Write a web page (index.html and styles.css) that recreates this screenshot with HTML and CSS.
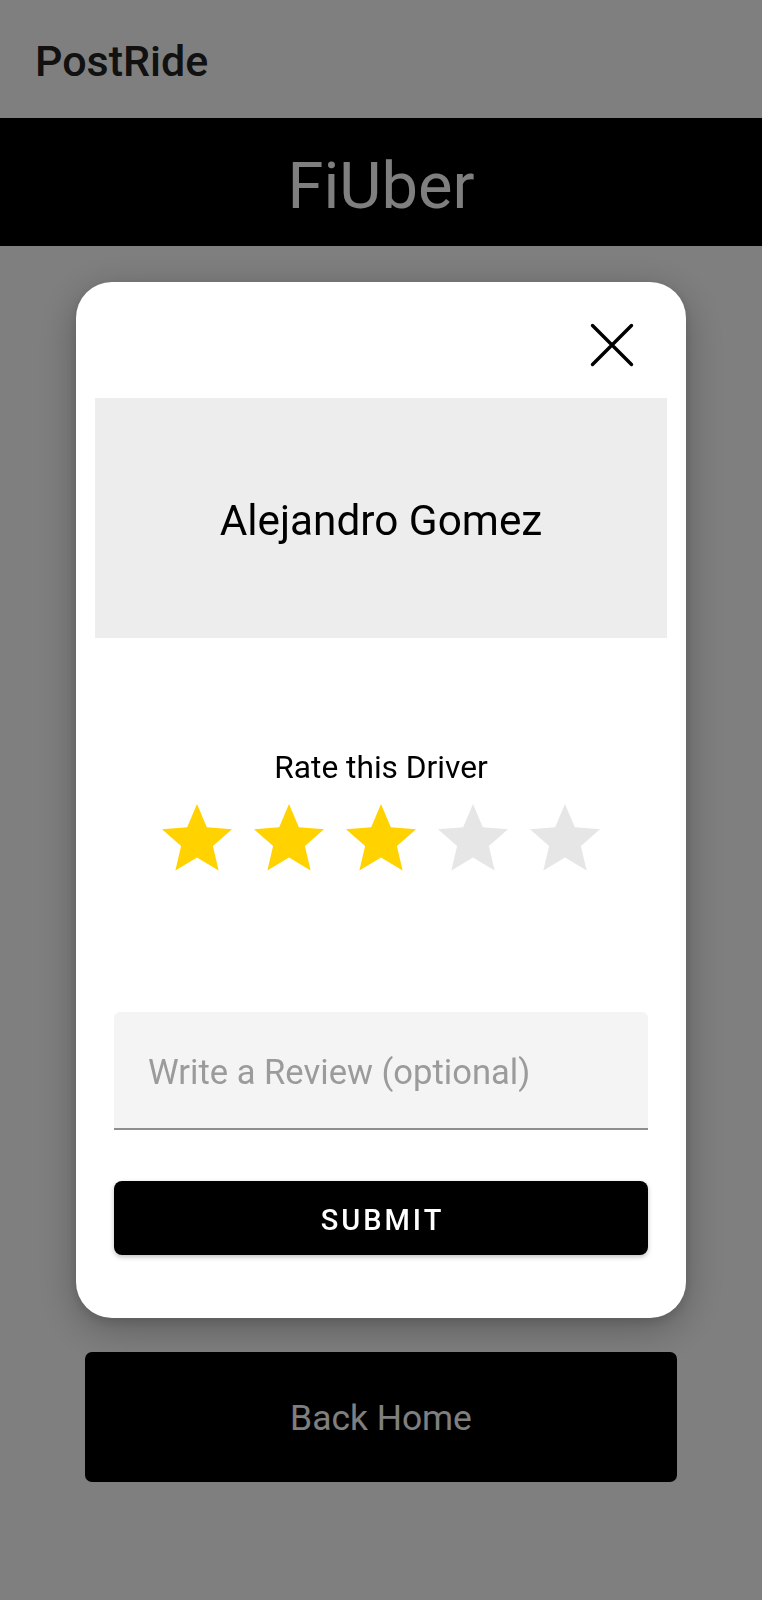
FILE: index.html
```html
<!DOCTYPE html>
<html lang="en">
<head>
<meta charset="utf-8">
<title>PostRide</title>
<link rel="stylesheet" href="styles.css">
</head>
<body>
  <div class="page">
    <header class="topbar">
      <h1 class="topbar-title">PostRide</h1>
    </header>
    <div class="brand">FiUber</div>
    <main class="content">
      <button class="back-btn" type="button">Back Home</button>
    </main>
  </div>

  <div class="scrim"></div>

  <div class="modal" role="dialog" aria-label="Rate driver">
    <div class="modal-head">
      <button class="close-btn" type="button" aria-label="Close">
        <svg width="60" height="60" viewBox="0 0 60 60"><path d="M10.5 10.5 L49.5 49.5 M49.5 10.5 L10.5 49.5" stroke="#000" stroke-width="3.4" stroke-linecap="round" fill="none"/></svg>
      </button>
    </div>
    <div class="driver-box">Alejandro Gomez</div>
    <div class="rate-label">Rate this Driver</div>
    <div class="stars">
      <svg class="star on" viewBox="0 0 24 24"><path d="M12 17.27L18.18 21l-1.64-7.03L22 9.24l-7.19-.61L12 2 9.19 8.63 2 9.24l5.46 4.73L5.82 21z"/></svg>
      <svg class="star on" viewBox="0 0 24 24"><path d="M12 17.27L18.18 21l-1.64-7.03L22 9.24l-7.19-.61L12 2 9.19 8.63 2 9.24l5.46 4.73L5.82 21z"/></svg>
      <svg class="star on" viewBox="0 0 24 24"><path d="M12 17.27L18.18 21l-1.64-7.03L22 9.24l-7.19-.61L12 2 9.19 8.63 2 9.24l5.46 4.73L5.82 21z"/></svg>
      <svg class="star off" viewBox="0 0 24 24"><path d="M12 17.27L18.18 21l-1.64-7.03L22 9.24l-7.19-.61L12 2 9.19 8.63 2 9.24l5.46 4.73L5.82 21z"/></svg>
      <svg class="star off" viewBox="0 0 24 24"><path d="M12 17.27L18.18 21l-1.64-7.03L22 9.24l-7.19-.61L12 2 9.19 8.63 2 9.24l5.46 4.73L5.82 21z"/></svg>
    </div>
    <div class="form">
      <div class="review-field"><span class="placeholder">Write a Review (optional)</span></div>
      <button class="submit-btn" type="button">SUBMIT</button>
    </div>
  </div>
</body>
</html>
```

FILE: styles.css
```css
* {
  box-sizing: border-box;
}

html, body {
  margin: 0;
  padding: 0;
}

body {
  font-family: Roboto, "Liberation Sans", sans-serif;
  background: #ffffff;
  color: #000;
}

.page {
  display: flex;
  flex-direction: column;
  min-height: 100vh;
  height: 1600px;
}

.topbar {
  height: 118px;
  padding: 36px 0 0 35px;
  background: #ffffff;
  box-shadow: 0 1px 2px rgba(0, 0, 0, 0.2);
  position: relative;
  z-index: 1;
}

.topbar-title {
  margin: 0;
  font-size: 43px;
  line-height: 50px;
  font-weight: 500;
  color: #222222;
}

.brand {
  height: 128px;
  padding-top: 30px;
  background: #000;
  color: #ffffff;
  text-align: center;
  font-size: 65px;
  line-height: 76px;
  font-weight: 400;
}

.content {
  flex: 1;
  display: flex;
  flex-direction: column;
  justify-content: flex-end;
  padding: 0 85px 118px;
}

.back-btn {
  height: 130px;
  width: 100%;
  border: none;
  border-radius: 7px;
  background: #000;
  color: #ffffff;
  font-family: Roboto, "Liberation Sans", sans-serif;
  font-size: 35.4px;
  font-weight: 400;
  padding: 2px 0 0;
}

.scrim {
  position: fixed;
  inset: 0;
  z-index: 5;
  background: rgba(0, 0, 0, 0.5);
}

.modal {
  position: fixed;
  z-index: 6;
  top: 282px;
  left: 76px;
  width: 610px;
  background: #ffffff;
  border-radius: 36px;
  box-shadow: 0 10px 40px rgba(0, 0, 0, 0.28), 0 4px 12px rgba(0, 0, 0, 0.12);
  padding: 33px 19px 63px;
  display: flex;
  flex-direction: column;
}

.modal-head {
  display: flex;
  justify-content: flex-end;
  padding-right: 25px;
  height: 60px;
}

.close-btn {
  width: 60px;
  height: 60px;
  padding: 0;
  border: none;
  background: transparent;
  display: block;
}

.close-btn svg {
  display: block;
}

.driver-box {
  margin-top: 23px;
  height: 240px;
  background: #ededed;
  display: flex;
  align-items: center;
  justify-content: center;
  padding-top: 4px;
  font-size: 42.3px;
  color: #000;
}

.rate-label {
  margin-top: 112px;
  text-align: center;
  font-size: 31.7px;
  line-height: 36px;
  color: #000;
}

.stars {
  margin-top: 11px;
  display: flex;
  justify-content: center;
  gap: 8px;
  height: 84px;
}

.star {
  width: 84px;
  height: 84px;
  display: block;
}

.star.on {
  fill: #ffd200;
}

.star.off {
  fill: #e6e6e6;
}

.form {
  margin-top: 131px;
  padding: 0 19px;
  display: flex;
  flex-direction: column;
  gap: 51px;
}

.review-field {
  height: 118px;
  background: #f4f4f4;
  border-radius: 6px 6px 0 0;
  border-bottom: 2px solid #8e8e8e;
  display: flex;
  align-items: center;
  padding: 3px 0 0 34px;
}

.placeholder {
  font-size: 34.6px;
  color: #9b9b9b;
}

.submit-btn {
  height: 74px;
  width: 100%;
  border: none;
  border-radius: 8px;
  background: #000;
  color: #ffffff;
  font-family: Roboto, "Liberation Sans", sans-serif;
  font-size: 29px;
  font-weight: 500;
  letter-spacing: 3px;
  padding: 3px 0 0 3px;
  box-shadow: 0 2px 5px rgba(0, 0, 0, 0.25);
}
```
